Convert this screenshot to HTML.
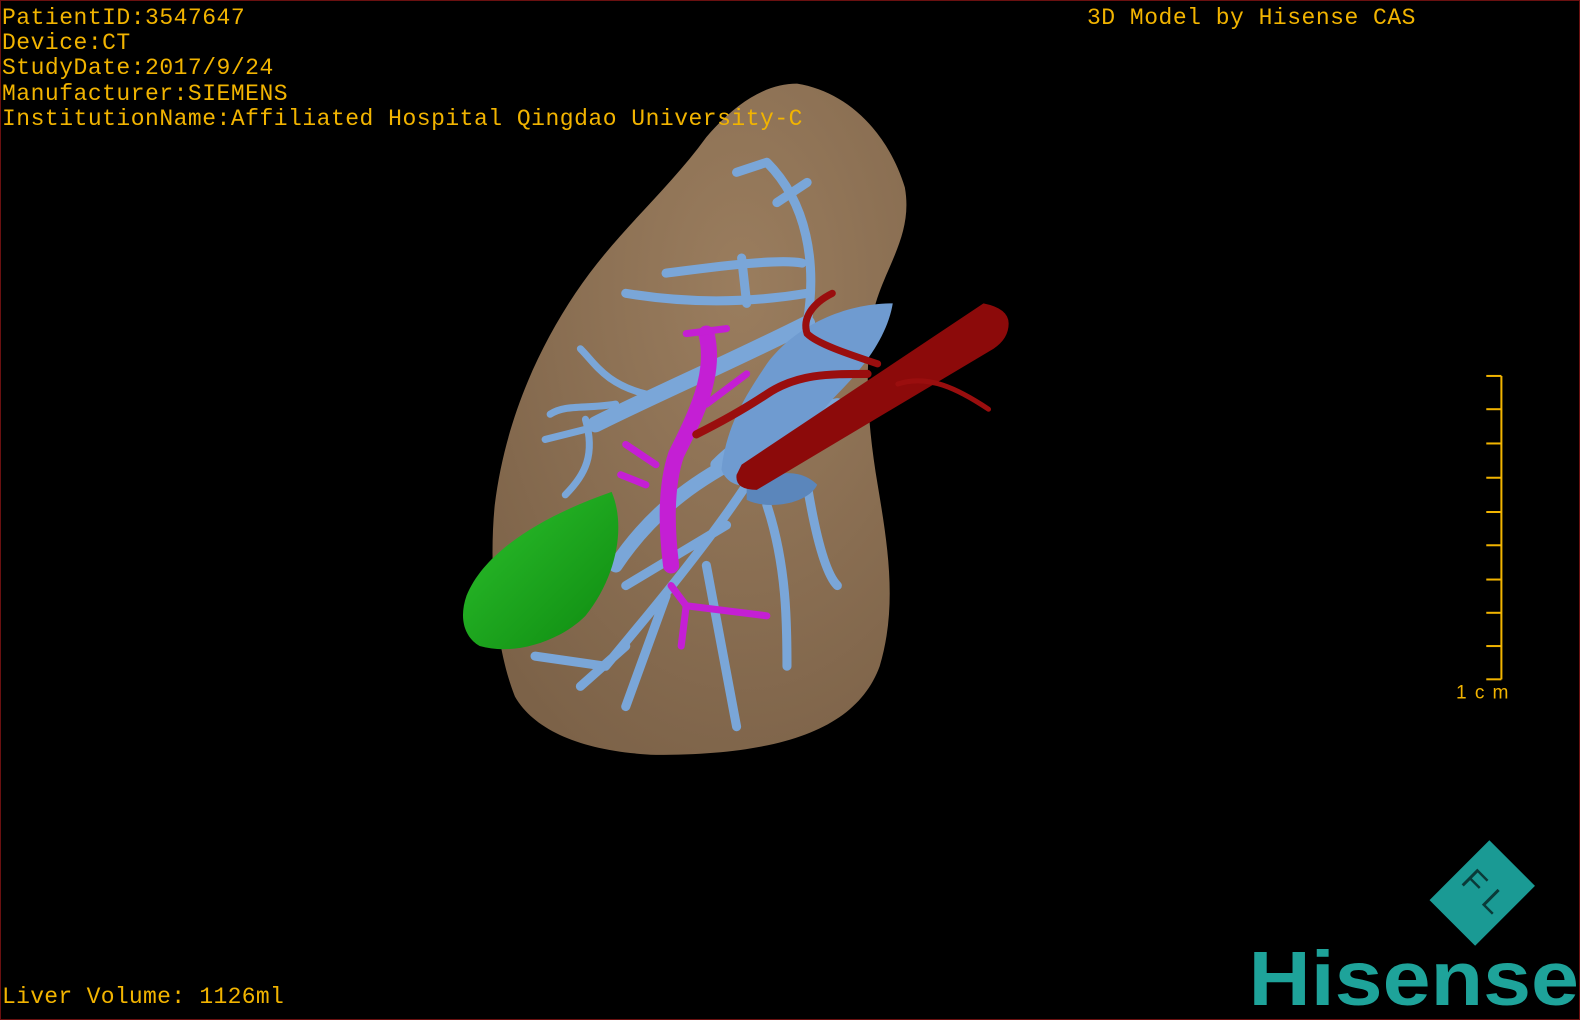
<!DOCTYPE html>
<html><head><meta charset="utf-8"><style>
html,body{margin:0;padding:0;background:#000;}
#f{position:relative;width:1580px;height:1020px;overflow:hidden;background:#000;box-sizing:border-box;border:1px solid #6a1010;}
.t{position:absolute;left:1px;font-family:"Liberation Mono",monospace;font-size:23px;color:#f2b400;line-height:25.2px;white-space:pre;letter-spacing:0.5px;}
svg{position:absolute;left:0;top:0;}
</style></head><body><div id="f">
<svg width="1580" height="1020" viewBox="0 0 1568 1012" preserveAspectRatio="none">
<defs>
<radialGradient id="lg" cx="0.6" cy="0.3" r="0.8"><stop offset="0" stop-color="#9a7d5e"/><stop offset="1" stop-color="#7c6248"/></radialGradient>
<linearGradient id="gg" x1="0" y1="0" x2="1" y2="1"><stop offset="0" stop-color="#2cc02c"/><stop offset="1" stop-color="#0e8a10"/></linearGradient>
</defs>
<path d="M790 82 C840 90 880 130 897 185 C905 230 880 260 868 300 C855 360 860 420 870 480 C880 540 890 600 872 660 C850 720 780 748 650 748 C580 745 530 725 510 690 C490 640 484 560 490 500 C500 420 530 350 570 290 C610 230 660 190 700 135 C730 100 760 82 790 82 Z" fill="url(#lg)"/>
<g fill="none" stroke="#7aa6d8" stroke-linecap="round">
<path d="M610 560 C650 500 700 470 740 450" stroke-width="14"/>
<path d="M590 420 C650 390 720 360 800 320" stroke-width="16"/>
<path d="M800 320 C810 260 800 200 760 160 M760 160 L730 170 M795 260 C770 255 700 265 660 270 M800 290 C740 300 680 300 620 290 M735 255 L740 300 M770 200 L800 180" stroke-width="9"/>
<path d="M640 390 C600 380 590 360 575 345 M600 420 C580 425 560 430 540 435 M610 400 C580 405 560 400 545 410" stroke-width="7"/>
<path d="M580 415 C590 450 580 470 560 490" stroke-width="7"/>
<path d="M740 480 C700 540 650 600 600 660 M600 660 L530 650 M620 640 L575 680 M700 560 L730 720 M760 500 C780 560 780 620 780 660 M720 520 L620 580 M800 480 C810 540 820 570 830 580 M660 590 L620 700" stroke-width="9"/>
<path d="M710 460 C740 430 780 410 830 400" stroke-width="12"/>
</g>
<path d="M760 360 C790 320 840 300 885 300 C880 330 860 360 830 390 C800 420 790 450 770 470 C740 490 720 480 715 465 C720 420 740 390 760 360 Z" fill="#6f9bd0"/>
<path d="M740 480 C780 460 800 470 810 480 C800 500 760 505 740 495 Z" fill="#5b86bb"/>
<g fill="none" stroke="#c41fd4" stroke-linecap="round" stroke-linejoin="round">
<path d="M700 330 C710 370 690 410 670 450 C660 480 660 520 665 560" stroke-width="16"/>
<path d="M680 330 L720 325 M700 400 L740 370 M650 460 L620 440 M640 480 L615 470 M665 580 L680 600 L760 610 M680 600 L675 640" stroke-width="7"/>
</g>
<path d="M735 460 L975 300 Q1000 305 1000 320 Q1000 335 985 345 L750 485 Q728 485 730 470 Z" fill="#8c0a0a"/>
<g fill="none" stroke="#9a0e0e" stroke-linecap="round">
<path d="M860 370 C820 370 790 370 760 390 C730 410 700 425 690 430" stroke-width="8"/>
<path d="M870 360 C840 350 810 340 800 330 C795 315 805 300 825 290" stroke-width="7"/>
<path d="M890 380 C920 370 950 385 980 405" stroke-width="5"/>
</g>
<path d="M462 590 C480 545 540 510 606 487 C620 520 612 570 580 610 C555 635 510 650 475 640 C458 630 455 610 462 590 Z" fill="url(#gg)"/>
<g stroke="#f2b400" stroke-width="2">
<line x1="1489" y1="372" x2="1489" y2="673"/>
<line x1="1474" y1="372" x2="1489" y2="372"/><line x1="1474" y1="405" x2="1489" y2="405"/><line x1="1474" y1="439" x2="1489" y2="439"/><line x1="1474" y1="473" x2="1489" y2="473"/><line x1="1474" y1="507" x2="1489" y2="507"/><line x1="1474" y1="540" x2="1489" y2="540"/><line x1="1474" y1="574" x2="1489" y2="574"/><line x1="1474" y1="607" x2="1489" y2="607"/><line x1="1474" y1="640" x2="1489" y2="640"/><line x1="1474" y1="673" x2="1489" y2="673"/>
</g>
<text x="1444" y="692" font-family="Liberation Sans,sans-serif" font-size="19" fill="#f2b400" textLength="52" lengthAdjust="spacing">1cm</text>
<g transform="translate(1470,885) rotate(-45)">
<rect x="-42" y="-32" width="84" height="64" fill="#1a9a94"/>
<text x="0" y="0" font-family="Liberation Sans,sans-serif" font-size="32" fill="#0a3a38" text-anchor="middle" dominant-baseline="middle" transform="rotate(90)">F L</text>
</g>
<text x="1238" y="996" font-family="Liberation Sans,sans-serif" font-weight="bold" font-size="76" fill="#1ea39a" textLength="328" lengthAdjust="spacingAndGlyphs">Hisense</text>
</svg>
<div class="t" style="top:5px">PatientID:3547647
Device:CT
StudyDate:2017/9/24
Manufacturer:SIEMENS
InstitutionName:Affiliated Hospital Qingdao University-C</div>
<div class="t" style="top:5px;left:1086px">3D Model by Hisense CAS</div>
<div class="t" style="top:984px;letter-spacing:0.3px">Liver Volume: 1126ml</div>
</div></body></html>
